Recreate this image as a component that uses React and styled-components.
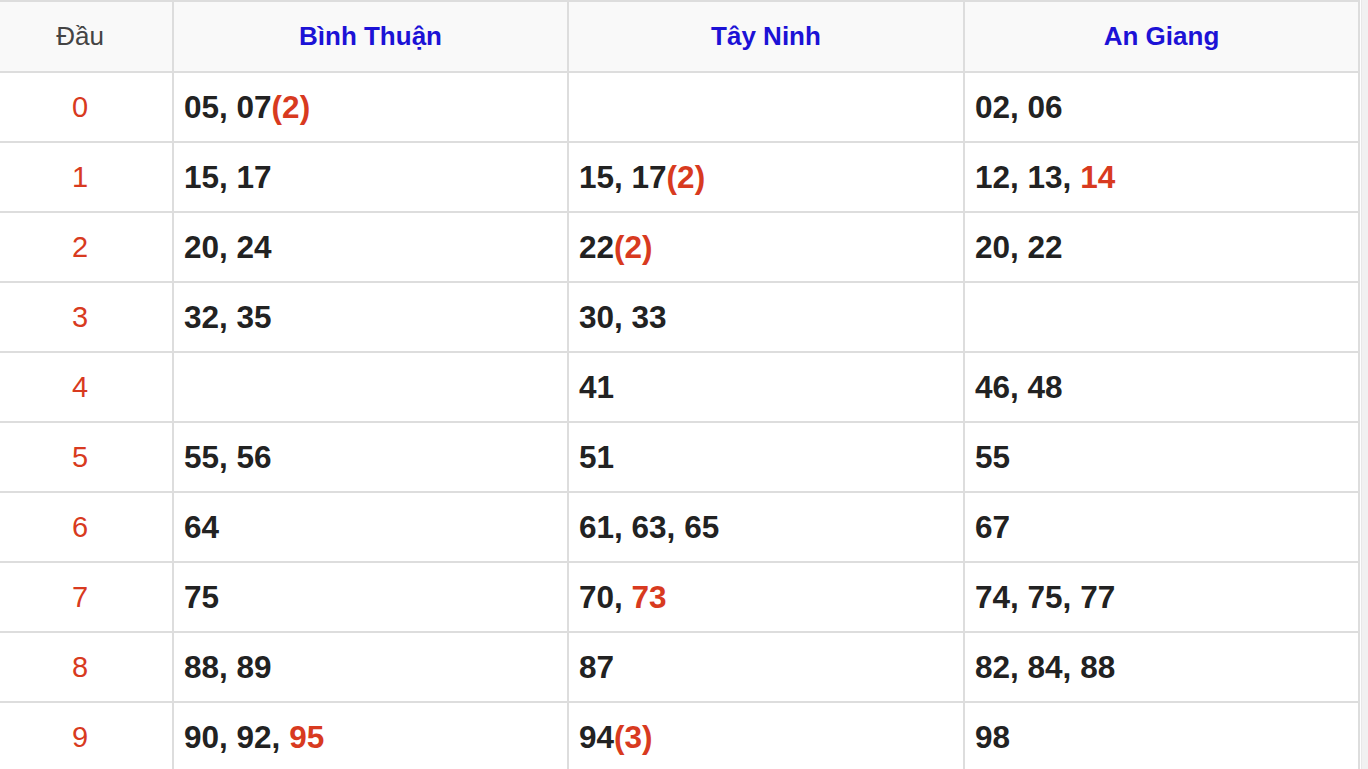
import React from "react";
import styled, { createGlobalStyle } from "styled-components";

const GlobalStyle = createGlobalStyle`
  html, body { margin: 0; padding: 0; background: #ffffff; }
  body { font-family: "Liberation Sans", Arial, Helvetica, sans-serif; }
`;

const Page = styled.div`
  display: flex;
  align-items: stretch;
  width: 1368px;
  height: 769px;
  overflow: hidden;
`;

const TableWrap = styled.div`
  width: 1359px;
  flex: none;
`;

const ScrollTrack = styled.div`
  flex: 1;
  margin-left: 2px;
  background: #f1f1f1;
  border-left: 1px solid #e8e8e8;
`;

const Table = styled.table`
  width: 1359px;
  border-collapse: collapse;
  table-layout: fixed;
  border-left: none;
`;

const HeadRow = styled.tr`
  height: 71px;
`;

const HeadCell = styled.th`
  padding: 0;
  background: #f9f9f9;
  border: 2px solid #dddddd;
  border-left: ${(p) => (p.$first ? "none" : "2px solid #dddddd")};
  text-align: center;
  vertical-align: middle;
  font-size: 26px;
  font-weight: ${(p) => (p.$first ? 400 : 700)};
  color: ${(p) => (p.$first ? "#444444" : "#1c12d6")};
  padding-right: ${(p) => (p.$first ? "12px" : "0")};
`;

const Row = styled.tr`
  height: 70px;
`;

const HeadNum = styled.td`
  padding: 0 12px 0 0;
  border: 2px solid #dddddd;
  border-left: none;
  text-align: center;
  vertical-align: middle;
  font-size: 29px;
  color: #d83a20;
`;

const Cell = styled.td`
  padding: 0 0 0 10px;
  border: 2px solid #dddddd;
  vertical-align: middle;
  font-size: 31.5px;
  font-weight: 700;
  color: #222222;
  white-space: nowrap;
`;

const Hot = styled.span`
  color: #d83a20;
`;

const stations = ["Bình Thuận", "Tây Ninh", "An Giang"];

// each item: [number, count or null, highlighted]
const data = [
  [[["05"], ["07", 2]], [], [["02"], ["06"]]],
  [[["15"], ["17"]], [["15"], ["17", 2]], [["12"], ["13"], ["14", null, true]]],
  [[["20"], ["24"]], [["22", 2]], [["20"], ["22"]]],
  [[["32"], ["35"]], [["30"], ["33"]], []],
  [[], [["41"]], [["46"], ["48"]]],
  [[["55"], ["56"]], [["51"]], [["55"]]],
  [[["64"]], [["61"], ["63"], ["65"]], [["67"]]],
  [[["75"]], [["70"], ["73", null, true]], [["74"], ["75"], ["77"]]],
  [[["88"], ["89"]], [["87"]], [["82"], ["84"], ["88"]]],
  [[["90"], ["92"], ["95", null, true]], [["94", 3]], [["98"]]],
];

function Numbers({ items }) {
  return items.map(([n, count, hot], i) => (
    <React.Fragment key={i}>
      {i > 0 && ", "}
      {hot ? <Hot>{n}</Hot> : n}
      {count ? <Hot>({count})</Hot> : null}
    </React.Fragment>
  ));
}

export default function App() {
  return (
    <>
      <GlobalStyle />
      <Page>
        <TableWrap>
          <Table>
            <colgroup>
              <col style={{ width: 173 }} />
              <col style={{ width: 395 }} />
              <col style={{ width: 396 }} />
              <col style={{ width: 395 }} />
            </colgroup>
            <thead>
              <HeadRow>
                <HeadCell $first>Đầu</HeadCell>
                {stations.map((s) => (
                  <HeadCell key={s}>{s}</HeadCell>
                ))}
              </HeadRow>
            </thead>
            <tbody>
              {data.map((row, i) => (
                <Row key={i}>
                  <HeadNum>{i}</HeadNum>
                  {row.map((items, j) => (
                    <Cell key={j}>
                      <Numbers items={items} />
                    </Cell>
                  ))}
                </Row>
              ))}
            </tbody>
          </Table>
        </TableWrap>
        <ScrollTrack />
      </Page>
    </>
  );
}
